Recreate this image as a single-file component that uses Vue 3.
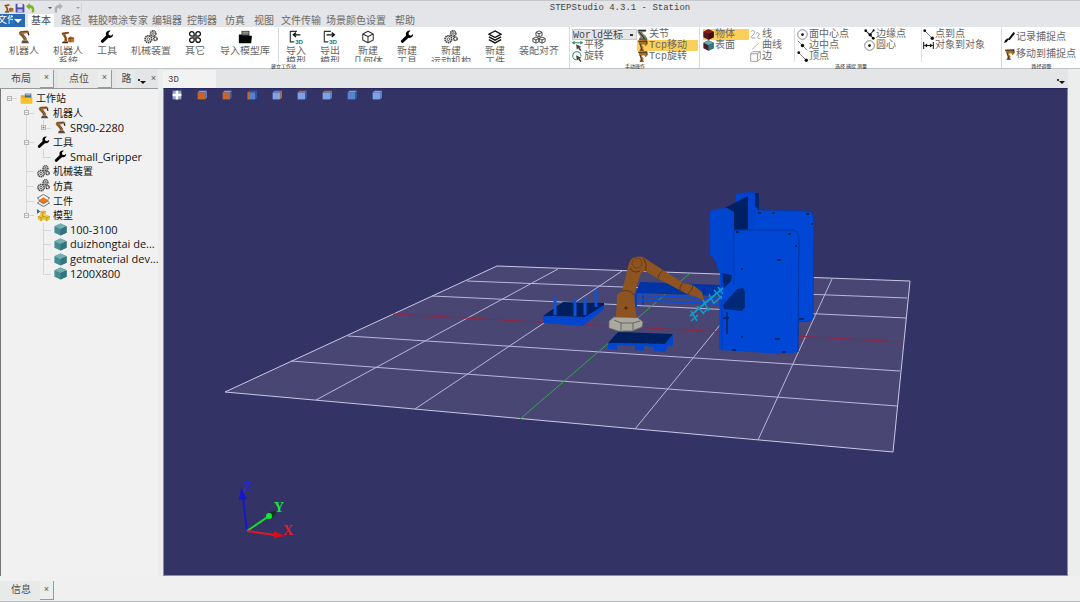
<script setup>
import { ref } from 'vue'

const menus = ['路径', '鞋胶喷涂专家', '编辑器', '控制器', '仿真', '视图', '文件传输', '场景颜色设置', '帮助']

const stationTools = [
  { icon: 'robot', label: '机器人', size: 'w44' },
  { icon: 'robots', label: '机器人', more: '系统', size: 'w44' },
  { icon: 'wrench', label: '工具', size: 'w34' },
  { icon: 'gears', label: '机械装置', size: 'w54' },
  { icon: 'clover', label: '其它', size: 'w34' },
  { icon: 'library', label: '导入模型库', size: 'w66' },
]
const buildTools = [
  { icon: 'import', label: '导入', more: '模型', size: 'w34' },
  { icon: 'export', label: '导出', more: '模型', size: 'w34' },
  { icon: 'box', label: '新建', more: '几何体', size: 'w42' },
  { icon: 'wrench', label: '新建', more: '工具', size: 'w36' },
  { icon: 'gears', label: '新建', more: '运动机构', size: 'w52' },
  { icon: 'layers', label: '新建', more: '工件', size: 'w36' },
  { icon: 'boxes', label: '装配对齐', size: 'w52' },
]

const frame = ref('World坐标')

// gutter cells: '' blank, 'v' passing line, 't' branch, 'l' last branch, 'r' root
const tree = [
  { cells: ['r'], box: '−', icon: 'folder', text: '工作站', cjk: true },
  { cells: ['', 't'], box: '−', icon: 'robot', text: '机器人', cjk: true },
  { cells: ['', 'v', 'l'], box: '+', icon: 'robot', text: 'SR90-2280' },
  { cells: ['', 't'], box: '−', icon: 'wrench', text: '工具', cjk: true },
  { cells: ['', 'v', 'l'], icon: 'wrench', text: 'Small_Gripper' },
  { cells: ['', 't'], icon: 'gears', text: '机械装置', cjk: true },
  { cells: ['', 't'], icon: 'gears', text: '仿真', cjk: true },
  { cells: ['', 't'], icon: 'part', text: '工件', cjk: true },
  { cells: ['', 'l'], box: '−', icon: 'models', text: '模型', cjk: true },
  { cells: ['', '', 't'], icon: 'cube', text: '100-3100' },
  { cells: ['', '', 't'], icon: 'cube', text: 'duizhongtai de...' },
  { cells: ['', '', 't'], icon: 'cube', text: 'getmaterial dev...' },
  { cells: ['', '', 'l'], icon: 'cube', text: '1200X800' },
]

const O = '#c8642a', L = '#7ea2e6', M = '#5484d0', D = '#3158a8'
const views = [
  { name: '前视', f: O, t: L, s: M },
  { name: '后视', f: O, t: L, s: D },
  { name: '左视', f: M, t: D, s: D, edge: O },
  { name: '右视', f: L, t: M, s: O },
  { name: '俯视', f: L, t: O, s: D },
  { name: '仰视', f: L, t: O, s: M },
  { name: '轴测', f: M, t: L, s: D },
  { name: '等轴测', f: L, t: L, s: M },
]

const gridLines = [
  'M467 281 907 298', 'M432 296 906 318', 'M348 336 900 371', 'M291 361 897 406',
  'M558 269 316 400', 'M622 271 415 409', 'M760 276 635 429', 'M832 279 758 440',
]
</script>

<template>
  <div class="app">
    <svg class="defs" aria-hidden="true">
      <symbol id="robot" viewBox="0 0 16 16">
        <path d="M2 3 4 1l8-.5 2 1.500-.5 2.500-1.500-1-5 1 4 5 .5 2.500H7.500L6.500 9 2.500 5z" fill="#a8733f" />
        <path d="M3 2.500 12 1.500M4 4l5 7M6.500 4.500l4 5" stroke="#5a381c" fill="none" />
        <path d="M6 12h6l2 3H5z" fill="#5a4c44" /><path d="M12.500 3l1 3" stroke="#222" stroke-width="1.500" />
      </symbol>
      <symbol id="robots" viewBox="0 0 16 16">
        <path d="M1 3l7-1 1 2-4 1 2 4v4H3.500L4 9 1 5z" fill="#b07038" />
        <path d="M1 4l8-1M4 6l2 6" stroke="#4c2c14" fill="none" />
        <path d="M2 13h6v2H1z" fill="#383030" />
        <path d="M8 9l3-2 4 2v5H8z" fill="#c47428" /><path d="M8 10l7-1M10 8l1 6" stroke="#7c4818" />
      </symbol>
      <symbol id="wrench" viewBox="0 0 16 16">
        <path d="M15 4.500 12.500 6.500 10 5.500 9.800 3 12 .8C9.500 .2 6.800 1.800 6.700 4.500c0 .7.1 1.200.3 1.700L1.200 12c-1 1 .9 3.500 2.300 2.500L9.800 8.800c3 1 5.500-1.600 5.200-4.300z" fill="#050505" />
      </symbol>
      <symbol id="gears" viewBox="0 0 16 16">
        <g fill="none" stroke="#454545">
          <circle cx="5" cy="10.500" r="3.800" stroke-width="2" stroke-dasharray="1.700 .6" /><circle cx="5" cy="10.500" r="1.500" />
          <circle cx="10.500" cy="4" r="3" stroke-width="1.900" stroke-dasharray="1.500 .5" /><circle cx="10.500" cy="4" r="1" />
          <circle cx="13" cy="10" r="2" stroke-width="1.700" stroke-dasharray="1.300 .4" />
        </g>
      </symbol>
      <symbol id="clover" viewBox="0 0 16 16">
        <g fill="none" stroke="#111" stroke-width="1.500">
          <path d="M7 7H4.500A2.600 2.600 0 1 1 7 4.400zM9 7V4.400A2.600 2.600 0 1 1 11.500 7zM7 9v2.600A2.600 2.600 0 1 1 4.500 9zM9 9h2.500A2.600 2.600 0 1 1 9 11.600z" />
        </g>
      </symbol>
      <symbol id="library" viewBox="0 0 16 16">
        <path d="M4 1h9v6H4z" fill="#333" /><path d="M5 2.500h7M5 4.500h7" stroke="#ccc" />
        <path d="M1 5h3l1 1.500h11L15 15H1z" fill="#050505" />
      </symbol>
      <symbol id="import" viewBox="0 0 16 16">
        <path d="M9 1.500H1.500v12H6" fill="none" stroke="#333" stroke-width="1.300" /><path d="M13 5.500H5.500M8 3 5 5.500 8 8" fill="none" stroke="#111" stroke-width="1.500" />
        <text x="7" y="15.500" font-family="Liberation Sans, sans-serif" font-size="7" font-weight="bold" fill="#27736f">3D</text>
      </symbol>
      <symbol id="export" viewBox="0 0 16 16">
        <path d="M9 1.500H1.500v12H6" fill="none" stroke="#333" stroke-width="1.300" /><path d="M4 5.500h8M10 3l3 2.500L10 8" fill="none" stroke="#111" stroke-width="1.500" />
        <text x="7" y="15.500" font-family="Liberation Sans, sans-serif" font-size="7" font-weight="bold" fill="#27736f">3D</text>
      </symbol>
      <symbol id="box" viewBox="0 0 16 16">
        <path d="M8 1.500 14 4.500v7l-6 3-6-3v-7zM2 4.500l6 3 6-3M8 7.500v7" fill="none" stroke="#333" stroke-width="1.200" stroke-linejoin="round" />
      </symbol>
      <symbol id="layers" viewBox="0 0 16 16">
        <path d="M8 1 15 4.800 8 8.600 1 4.800zM1 7.800l7 3.800 7-3.800M1 11l7 3.800L15 11" fill="none" stroke="#111" stroke-width="1.500" />
      </symbol>
      <symbol id="boxes" viewBox="0 0 16 16">
        <path d="M8 1l3.500 1.700v3.600L8 8 4.500 6.300V2.700zM4.500 2.700 8 4.400l3.500-1.700M8 4.400V8M4.500 8 8 9.700v3.600L4.500 15 1 13.300V9.700zM1 9.700l3.500 1.700L8 9.700M4.500 11.400V15M11.500 8 15 9.700v3.600L11.500 15 8 13.300V9.700zM8 9.700l3.500 1.700L15 9.700M11.500 11.400V15" fill="none" stroke="#333" />
      </symbol>
      <symbol id="folder" viewBox="0 0 16 16">
        <path d="M1 4h5l1 2h8v8H1z" fill="#e8a317" /><path d="M6 2h8v5H6z" fill="#4d6d8c" /><path d="M7 3h6v1H7z" fill="#dfe9f2" /><path d="M1 7h14v7H1z" fill="#f8c22e" />
      </symbol>
      <symbol id="part" viewBox="0 0 16 16">
        <path d="M8 .5 15.500 5M8 .5.5 5 3 7M15.500 5 13 7M.5 11 8 15.500l7.500-4.500L13 9M.5 11 3 9" fill="none" stroke="#555" /><path d="M8 4l6 4-6 4-6-4z" fill="#e97a1e" /><path d="M2 8l6 4 6-4" fill="none" stroke="#a4480c" />
      </symbol>
      <symbol id="models" viewBox="0 0 16 16">
        <path d="M4 3l4-1.500L11 3v4L7 9 4 7zM1 9l4-2 4 2v4l-4 2-4-2zM8 9l4-2 4 2v4l-4 2-4-2z" fill="#f0c53a" /><path d="M4 3l3 1.500L11 3M7 4.500V9M1 9l4 2 4-2M5 11v4M8 9l4 2 4-2M12 11v4" fill="none" stroke="#a87909" stroke-width=".7" /><path d="M0 0l4 3-4 3z" fill="#2d66b2" />
      </symbol>
      <symbol id="cube" viewBox="0 0 16 16">
        <path d="M8 .5 15.500 4v8L8 15.500.5 12V4z" fill="#458b92" /><path d="M8 .5 15.500 4 8 7.500.5 4z" fill="#74b0b3" /><path d="M8 7.500 15.500 4v8L8 15.500z" fill="#35747d" />
      </symbol>
      <symbol id="redcube" viewBox="0 0 16 16">
        <path d="M8 .5 15.500 4v8L8 15.500.5 12V4z" fill="#57161a" /><path d="M8 .5 15.500 4 8 7.500.5 4z" fill="#7b2225" /><path d="M8 7.500 15.500 4v8L8 15.500z" fill="#3e0d12" />
      </symbol>
      <symbol id="facecube" viewBox="0 0 16 16">
        <path d="M8 .5 15.500 4v8L8 15.500.5 12V4z" fill="#4b1e27" /><path d="M8 .5 15.500 4 8 7.500.5 4z" fill="#69a9a9" /><path d="M8 7.500 15.500 4v8L8 15.500z" fill="#2f8083" />
      </symbol>
      <symbol id="move" viewBox="0 0 16 16">
        <path d="M1 4h13M4 2 1 4l3 2M12 2l3 2-3 2" fill="none" stroke="#3a8a70" stroke-width="1.500" /><path d="M6 6l8 4-3 1 3 4-2 1-3-4-2 2z" fill="#444" />
      </symbol>
      <symbol id="rotate" viewBox="0 0 16 16">
        <path d="M6 13A6 6 0 1 1 13 8" fill="none" stroke="#3a8a70" stroke-width="1.500" /><path d="M6 6l8 4-3 1 3 4-2 1-3-4-2 2z" fill="#444" />
      </symbol>
      <symbol id="joint" viewBox="0 0 16 16">
        <path d="M1 1h13l-1 3-6 1 6 5 2 5H3l2-4-4-6z" fill="#8a826e" /><path d="M2 2h11M3 4l8 10M3 15h12" stroke="#26352f" stroke-width="1.500" fill="none" />
      </symbol>
      <symbol id="tcp" viewBox="0 0 16 16">
        <path d="M1 1l14-.5.5 5.500-3 3-2-3-4 1 3 4-1 4H4l2-5z" fill="#a5722c" /><path d="M2 2l12-.5.5 4M4 5l3 9M4 15h6" stroke="#4f3518" stroke-width="1.500" fill="none" />
      </symbol>
      <symbol id="line" viewBox="0 0 16 16">
        <path d="M1 4c4-4 8 0 4 4-2 2-4 4-2 5h5M9 6c4-2 6 2 3 4-2 2-1 4 3 4" fill="none" stroke="#777" />
      </symbol>
      <symbol id="curve" viewBox="0 0 16 16"><path d="M3 14 13 4" stroke="#888" /></symbol>
      <symbol id="edge" viewBox="0 0 16 16"><path d="M1 4h10v11H1zM1 4l3-3h11l-4 3M15 1v10l-4 4" fill="none" stroke="#777" /></symbol>
      <symbol id="center" viewBox="0 0 16 16"><circle cx="8" cy="8" r="7" fill="none" stroke="#555" /><circle cx="8" cy="8" r="2" fill="#111" /></symbol>
      <symbol id="mid" viewBox="0 0 16 16"><path d="M1 1l14 14" stroke="#555" /><circle cx="8" cy="8" r="2.500" fill="#111" /></symbol>
      <symbol id="vertex" viewBox="0 0 16 16"><path d="M2 2l12 12" stroke="#444" /><circle cx="2.500" cy="2.500" r="2" fill="#111" /><circle cx="13.500" cy="13.500" r="2.500" fill="#111" /></symbol>
      <symbol id="border" viewBox="0 0 16 16"><path d="M2 2l12 12M14 2 9 8" stroke="#333" stroke-width="1.500" /><circle cx="2.500" cy="2.500" r="2" /><circle cx="9" cy="8.500" r="2.500" /><circle cx="13.500" cy="13.500" r="2" /><circle cx="14" cy="2" r="1.500" /></symbol>
      <symbol id="object" viewBox="0 0 16 16"><path d="M1 3v10M15 3v10M2 8h12" stroke="#111" stroke-width="1.500" /><path d="M6 5v6L2 8zM10 5v6l4-3z" fill="#111" /></symbol>
      <symbol id="pen" viewBox="0 0 16 16"><path d="M15 1 7 11M6 10l-4 4" stroke="#111" stroke-width="3" /><path d="M0 16l2-5 3 3z" fill="#111" /></symbol>
    </svg>

    <header class="titlebar">
      <div class="quick">
        <button class="plain" aria-label="机器人"><svg class="i10"><use href="#robots" /></svg></button>
        <button class="plain" aria-label="保存">
          <svg class="i10" viewBox="0 0 16 16"><path d="M1 1h12l2 2v12H1z" fill="#4d50a8" /><path d="M4 1h8v6H4z" fill="#e8e8fa" /><path d="M4 10h8v5H4z" fill="#b9bbe4" /></svg>
        </button>
        <button class="plain" aria-label="撤销">
          <svg class="i10" viewBox="0 0 16 16"><path d="M0 5l6-5v3c6 0 8 3 7 12H9c1-6 0-7-3-7v3z" fill="#7db52c" /></svg>
        </button>
        <i class="caret undo"></i>
        <button class="plain" aria-label="重做">
          <svg class="i10" viewBox="0 0 16 16"><path d="M16 5l-6-5v3C4 3 2 6 3 15h4C6 9 7 8 10 8v3z" fill="#b0b3b5" /></svg>
        </button>
        <i class="caret redo"></i>
      </div>
      <h1>STEPStudio 4.3.1 - Station</h1>
    </header>

    <nav class="menubar">
      <button class="file"><span>文件</span><i></i></button>
      <button class="menu active">基本</button>
      <button v-for="(m, i) in menus" :key="m" class="menu" :class="'m' + i">{{ m }}</button>
    </nav>

    <section class="ribbon">
      <div class="group station">
        <div class="tools">
          <button v-for="(t, i) in stationTools" :key="i" class="big" :class="t.size">
            <svg class="i14"><use :href="'#' + t.icon" /></svg>
            <span>{{ t.label }}<br v-if="t.more">{{ t.more }}</span>
          </button>
          <i class="split"></i>
          <button v-for="(t, i) in buildTools" :key="'b' + i" class="big" :class="t.size">
            <svg class="i14"><use :href="'#' + t.icon" /></svg>
            <span>{{ t.label }}<br v-if="t.more">{{ t.more }}</span>
          </button>
        </div>
        <p class="caption">建立工作站</p>
      </div>

      <div class="group">
        <div class="tools">
          <div class="col manual">
            <select v-model="frame" aria-label="坐标系"><option>World坐标</option></select>
            <button class="small"><svg><use href="#move" /></svg>平移</button>
            <button class="small"><svg><use href="#rotate" /></svg>旋转</button>
          </div>
          <div class="col tcp">
            <button class="small"><svg><use href="#joint" /></svg>关节</button>
            <button class="small on"><svg><use href="#tcp" /></svg>Tcp移动</button>
            <button class="small"><svg><use href="#tcp" /></svg>Tcp旋转</button>
          </div>
        </div>
        <p class="caption">手动操作</p>
      </div>

      <div class="group">
        <div class="tools">
          <div class="col pick">
            <button class="small on"><svg><use href="#redcube" /></svg>物体</button>
            <button class="small"><svg><use href="#facecube" /></svg>表面</button>
          </div>
          <div class="col shape">
            <button class="small"><svg><use href="#line" /></svg>线</button>
            <button class="small"><svg><use href="#curve" /></svg>曲线</button>
            <button class="small"><svg><use href="#edge" /></svg>边</button>
          </div>
          <i class="split"></i>
          <div class="col face">
            <button class="small"><svg><use href="#center" /></svg>面中心点</button>
            <button class="small"><svg><use href="#mid" /></svg>边中点</button>
            <button class="small"><svg><use href="#vertex" /></svg>顶点</button>
          </div>
          <div class="col rim">
            <button class="small"><svg><use href="#border" /></svg>边缘点</button>
            <button class="small"><svg><use href="#center" /></svg>圆心</button>
          </div>
          <i class="split"></i>
          <div class="col measure">
            <button class="small"><svg><use href="#vertex" /></svg>点到点</button>
            <button class="small"><svg><use href="#object" /></svg>对象到对象</button>
          </div>
        </div>
        <p class="caption">选择 捕捉 测量</p>
      </div>

      <div class="group last">
        <div class="tools">
          <div class="col path">
            <button class="small"><svg><use href="#pen" /></svg>记录捕捉点</button>
            <button class="small"><svg><use href="#tcp" /></svg>移动到捕捉点</button>
          </div>
        </div>
        <p class="caption">路径调整</p>
      </div>
    </section>

    <main class="work">
      <aside class="dock">
        <div class="docktabs">
          <button class="tab">布局</button><button class="close" aria-label="关闭布局">×</button>
          <button class="tab">点位</button><button class="close" aria-label="关闭点位">×</button>
          <button class="tab short">路</button>
          <button class="more" aria-label="更多"><i class="dot"></i><i></i></button>
          <button class="close flat" aria-label="关闭路径">×</button>
        </div>
        <div class="panel">
          <ul class="tree" role="tree">
            <li v-for="(n, i) in tree" :key="i" role="treeitem">
              <i v-for="(c, j) in n.cells" :key="j" class="cell" :class="c">
                <b v-if="n.box && j === n.cells.length - 1">{{ n.box }}</b>
              </i>
              <svg class="i13"><use :href="'#' + n.icon" /></svg>
              <span :class="{ cjk: n.cjk }">{{ n.text }}</span>
            </li>
          </ul>
        </div>
      </aside>

      <section class="view">
        <div class="viewtabs">
          <button class="viewtab">3D</button>
          <button class="more" aria-label="视图列表"><i class="dot"></i><i></i></button>
        </div>
        <div class="canvas">
          <svg class="scene" viewBox="164 89 903 486" role="img" aria-label="机器人工作站三维场景">
            <path d="M497 266 910 281 893 452 225 392z" fill="#4a4674" stroke="#c9c8e6" />
            <path v-for="d in gridLines" :key="d" :d="d" stroke="#b9b8dc" stroke-width="1" />
            <path d="M393 314 903 342" stroke="#97243f" /><path d="M689 274 520 419" stroke="#2fa845" />

            <path d="M636 293v14M643 293v12M720 297v9" stroke="#0041c4" stroke-width="2" />
            <path d="M640 282 722 285v11l-86-3z" fill="#0034a5" />
            <path d="M637 295 722 299M637 300 722 304" stroke="#0b4fd8" stroke-width="2" />

            <path d="M543 316 563 302 604 303 604 308 585 317z" fill="#001f5e" />
            <path d="M543 316 585 317 604 305 604 309 583 326 543 323z" fill="#0046d0" />
            <path d="M555 298v17M575 299v17M585 297v18M596 290v17" stroke="#0b54d8" stroke-width="3" />
            <path d="M608 343 618 332 673 334 665 344z" fill="#001f5e" />
            <path d="M608 343 665 344 673 335v10l-4 2v-3l-4 8-11-1v-4l-10-1v5l-9-1v-4l-18-1v5l-9-1z" fill="#0046d0" />

            <path d="M754 210 808 211q6 2 6 9L813 318 810 321 797 322 754 300z" fill="#0047d6" stroke="#0038ad" stroke-width=".7" />
            <path d="M736 194 748 192 759 193V212L755 213V232H734z" fill="#0043cc" />
            <path d="M755 193l4 0v17l-4-4z" fill="#00266e" />
            <path d="M725 208 748 196V230H734V212z" fill="#002064" />
            <path d="M720 270H734V230L793 230q6 2 6 9L798 352 783 354 719 350z" fill="#0047d6" />
            <path d="M734 230 793 230q6 2 6 9L798 352" fill="none" stroke="#0034a0" />
            <path d="M710 212 715 209 727 208 734 212V272L719 272 715 260 710 255z" fill="#0045cf" />
            <path d="M722 273 732 275 731 281 724 288z" fill="#00266e" />
            <path d="M734 230V285M722 273V350" stroke="#0034a0" stroke-width=".7" />
            <path d="M723 305 737 289 743 288 745 292V307L742 311 724 309z" fill="#002978" />
            <path d="M727 312v22M723 318h6" stroke="#002978" stroke-width="2" />
            <path d="M741 269h2M777 260h4M736 232h3M788 234h3M795 246h2M806 214h3M811 224h2M758 213h3M772 213h3M741 337h2M775 339h5M732 350h4M782 352h4M799 319h5" stroke="#042869" stroke-width="2" />

            <path d="M609 321 614 317 637 317 643 322 642 327 637 329 632 331H618L609 328z" fill="#aaa9a1" stroke="#69685f" stroke-width=".7" />
            <path d="M614 320l7 3h12l7-2M621 323v7M633 323v7" fill="none" stroke="#66665f" />
            <path d="M616 317 617 295 622 291 629 263Q632 255 643 257L663 270 683 283 693 285 702 292 704 301 697 297 687 294 657 278 645 271 641 273 634 294 635 308 637 318z" fill="#8d5421" />
            <path d="M622 291q8-2 12 4M630 268q3 6 10 3M643 258q5 6 2 13M663 270q-4 3-5 8M683 283q-5 4-2 9M693 285q-1 6-5 9" fill="none" stroke="#603510" />
            <circle cx="637" cy="263" r="5" fill="none" stroke="#68380f" stroke-width=".7" /><circle cx="626" cy="308" r="1.500" fill="#4e290e" />
            <g stroke="#119bca" fill="none">
              <path d="M690 316 723 288" stroke-width="2" /><path d="M691 311l6 10M697 306l7 8M703 300l6 11M709 294l5 10M714 290l8 9M718 287l5 7M691 321l7-6M703 313l6-5M714 303l8-7" stroke-width="1.500" />
            </g>

            <path d="M247 531 243 498" stroke="#1818c8" stroke-width="2" /><path d="M241 488 247 499 239 500z" fill="#1515cb" />
            <path d="M247 531 272 514" stroke="#12de32" stroke-width="2" /><path d="M277 511 273 518 269 512z" fill="#073b19" /><circle cx="269" cy="516" r="3" fill="#14e735" />
            <path d="M247 531 275 535" stroke="#e01822" stroke-width="2" /><path d="M285 536 274 531v7z" fill="#d70e16" />
            <g class="axis"><text x="243" y="492" fill="#2626d8">Z</text><text x="274" y="512" fill="#1de33b">Y</text><text x="283" y="535" fill="#e31b26">X</text></g>
          </svg>
          <div class="viewbar">
            <button class="plain" aria-label="适应窗口">
              <svg class="i10" viewBox="0 0 16 16"><path d="M1 1h14v14H1z" fill="#8fa6c8" /><path d="M6 1h4v5h5v4h-5v5H6v-5H1V6h5z" fill="#fff" /></svg>
            </button>
            <button v-for="v in views" :key="v.name" class="plain" :aria-label="v.name">
              <svg class="i10" viewBox="0 0 16 16">
                <path d="M1 4 4 1h12l-3 3z" :fill="v.t" /><path d="M13 4l3-3v11l-3 3z" :fill="v.s" /><path d="M1 4h12v11H1z" :fill="v.f" />
                <path v-if="v.edge" d="M1 3h3v12H1z" :fill="v.edge" />
              </svg>
            </button>
          </div>
        </div>
      </section>
    </main>

    <footer class="status">
      <button class="tab">信息</button><button class="close" aria-label="关闭信息">×</button>
    </footer>
  </div>
</template>

<style>
body { margin: 0; background: #f0f0f0; }
</style>

<style scoped>
.app { display: flex; flex-direction: column; min-height: 100vh; overflow: hidden; box-sizing: border-box; border-bottom: 1px solid #b4b7b9; background: #f0f0f0; color: #555; font: 10px/11px "Liberation Mono", "Noto Sans CJK SC", monospace; }
.app * { box-sizing: border-box; }
button, select { font: inherit; color: inherit; margin: 0; padding: 0; border: 0; background: none; border-radius: 0; white-space: nowrap; }
.defs { position: absolute; width: 0; height: 0; }
svg { display: block; flex: none; }
.i10 { width: 10px; height: 10px; }
.i13 { width: 13px; height: 13px; }
.i14 { width: 14px; height: 14px; }

.titlebar { display: flex; align-items: center; height: 14px; border-top: 1px solid #c5c7c9; background: #e4e5e8; }
.quick { display: flex; align-items: center; width: 82px; padding-left: 4px; gap: 1px; border-right: 1px solid #d2d4d6; }
.caret { border: 2px solid transparent; border-top-color: #555; border-bottom: 0; }
.undo { margin-left: 11px; }
.redo { margin-left: 12px; opacity: .5; }
h1 { flex: 1; margin: 0; padding: 2px 0 0 78px; text-align: center; font-size: 9px; font-weight: 400; color: #444; }

.menubar { display: flex; height: 13px; background: #e4e5e8; color: #6a6a6a; }
.file { display: flex; align-items: center; justify-content: space-between; width: 25px; padding-right: 3px; background: #2a6ab2; color: #fff; }
.file span { width: 13px; overflow: hidden; text-indent: -3px; }
.file i { border: 4px solid transparent; border-top-color: #fff; border-bottom: 0; }
.menu { margin-right: 7px; padding-top: 2px; }
.menu.active { width: 26px; margin: 0 7px 0 3px; background: #fff; color: #444; }
.m1 { margin-right: 4px; }
.m2, .m6 { margin-right: 5px; }
.m3 { margin-right: 8px; }
.m4, .m7 { margin-right: 9px; }

.ribbon { display: flex; height: 42px; background: #fff; border-bottom: 1px solid #bfc1c3; color: #666; }
.group { display: flex; flex-direction: column; flex: none; border-right: 1px solid #d8dadc; padding: 1px 1px 0 2px; }
.group.station { padding-right: 4px; }
.group.last { flex: 1; border-right: 0; }
.tools { display: flex; height: 35px; }
.caption { margin: 0; text-align: center; font: 5px/5px "Noto Sans CJK SC", sans-serif; color: #222; }
.big { display: flex; flex-direction: column; align-items: center; padding-top: 2px; gap: 2px; }
.big span { height: 16px; overflow: hidden; text-align: center; }
.w34 { width: 34px; } .w36 { width: 36px; } .w42 { width: 42px; } .w44 { width: 44px; } .w52 { width: 52px; } .w54 { width: 54px; } .w66 { width: 66px; }
.split { width: 1px; height: 34px; background: #dcdee0; }
.col { display: flex; flex-direction: column; padding-top: 1px; }
.small { display: flex; align-items: center; gap: 1px; height: 11px; text-align: left; }
.small svg { width: 11px; height: 11px; }
.on { background: #fccf5c; }
.manual { width: 65px; }
.manual select { height: 11px; appearance: none; border: 1px solid #c8c8c8; background: linear-gradient(#333, #333) right 3px center / 3px 2px no-repeat, #e6e6e6; color: #444; }
.tcp { width: 61px; }
.pick { width: 46px; margin-left: 1px; }
.shape { width: 45px; padding-left: 1px; }
.face { width: 69px; padding-left: 2px; }
.rim { width: 57px; }
.measure { width: 78px; padding-left: 1px; }
.path { padding-top: 4px; gap: 6px; }

.work { display: flex; flex: 1; padding-right: 12px; background: #eceded; }
.dock { display: flex; flex-direction: column; width: 158px; margin-right: 5px; }
.docktabs, .viewtabs { display: flex; height: 19px; padding-top: 1px; background: #e3e5e6; }
.docktabs { height: 20px; border-bottom: 1px solid #999; }
.tab { width: 40px; padding-left: 2px; color: #4c4c4c; background: #e8eaea; }
.close { width: 14px; margin-right: 4px; border-right: 1px solid #999; border-bottom: 1px solid #999; color: #555; background: #eceded; font-size: 9px; }
.short { width: 19px; }
.flat { width: 9px; border: 0; margin: 0; background: none; }
.more { display: flex; align-items: center; justify-content: center; width: 14px; padding-top: 5px; }
.more i { margin-top: 2px; border: 3px solid transparent; border-top-color: #111; border-bottom: 0; }
.more .dot { margin: 0 0 3px; border: 1px solid #333; }
.panel { flex: 1; border-left: 1px solid #777; background: #f1f1f1; }
.tree { display: grid; grid-auto-rows: 1fr; height: 192px; margin: 0; padding: 2px 0 0; list-style: none; color: #151515; font: 11px/14px "Open Sans", "Noto Sans CJK SC", sans-serif; }
.tree li { display: flex; align-items: center; white-space: nowrap; overflow: hidden; }
.tree span { margin-left: 3px; }
.tree .cjk { font-size: 10px; }
.cell { position: relative; flex: none; align-self: stretch; display: flex; align-items: center; justify-content: center; width: 17px; font-style: normal; }
.cell:last-of-type { margin-right: 2px; }
.cell::before, .cell::after { content: ""; position: absolute; left: 8px; }
.v::before, .t::before { top: 0; bottom: 0; border-left: 1px solid #d6d6d6; }
.l::before { top: 0; height: 50%; border-left: 1px solid #d6d6d6; }
.t::after, .l::after, .r::after { top: 50%; width: 8px; border-top: 1px solid #d6d6d6; }
.cell b { position: relative; z-index: 1; width: 5px; height: 5px; border: 1px solid #b5b5b5; background: #f4f4f4; color: #555; font: 5px/3px "Liberation Sans", sans-serif; text-align: center; }

.view { display: flex; flex-direction: column; flex: 1; }
.viewtabs { justify-content: space-between; }
.viewtab { width: 53px; padding: 2px 0 0 5px; text-align: left; font-size: 9px; color: #444; background: #f2f2f2; }
.canvas { position: relative; flex: 1; border: 1px solid #8b8ba8; border-top-color: #292960; background: #333366; }
.scene { position: absolute; inset: 0; width: 100%; height: 100%; }
.axis { font: bold 14px "Liberation Serif", serif; }
.viewbar { position: absolute; left: 8px; top: 1px; display: flex; gap: 15px; }

.status { display: flex; height: 25px; padding: 5px 0 1px; }
</style>
